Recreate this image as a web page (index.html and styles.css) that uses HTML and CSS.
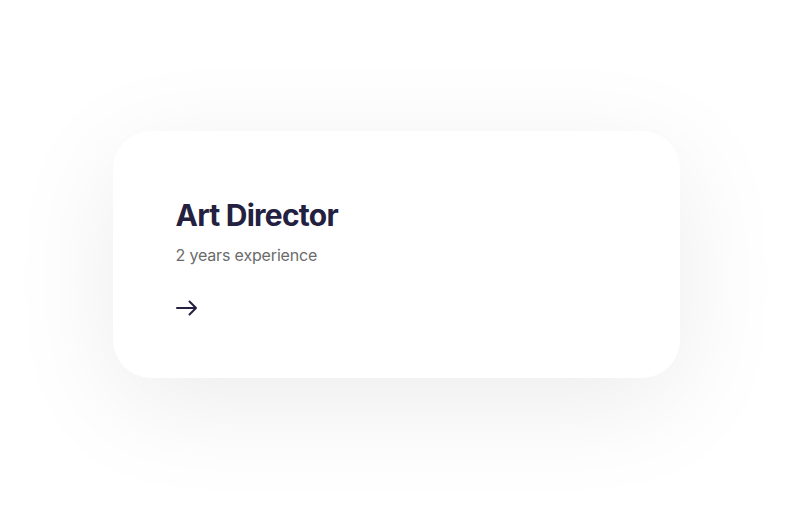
FILE: index.html
```html
<!DOCTYPE html>
<html>
<head>
<meta charset="utf-8">
<link rel="stylesheet" href="styles.css">
</head>
<body>
<div class="card">
  <h2 class="title">Art Director</h2>
  <p class="sub">2 years experience</p>
  <a class="arrow" href="#" aria-label="Open">
    <svg width="22" height="16" viewBox="0 0 22 16" fill="none" stroke="#23213f" stroke-width="2" stroke-linecap="round" stroke-linejoin="round">
      <path d="M1 8h19M13.5 1.5L20 8l-6.5 6.5"/>
    </svg>
  </a>
</div>
</body>
</html>
```
FILE: styles.css
```css
html, body { margin: 0; padding: 0; background: #fff; }
body {
  font-family: Inter, "Noto Sans", sans-serif;
  display: flex;
  justify-content: center;
  align-items: flex-start;
  padding-top: 131px;
  min-height: 530px;
  box-sizing: border-box;
}
.card {
  width: 567px;
  height: 247px;
  box-sizing: border-box;
  padding: 64px 63px;
  background: #fff;
  border-radius: 38px;
  box-shadow: 0 25px 110px rgba(0, 0, 0, 0.08);
  display: flex;
  flex-direction: column;
  align-items: flex-start;
}
.title {
  margin: 0;
  font-size: 30px;
  line-height: 40px;
  font-weight: 700;
  letter-spacing: -0.025em;
  color: #23213f;
}
.sub {
  margin: 9px 0 0;
  font-size: 16px;
  line-height: 22px;
  color: #6b6b6b;
  letter-spacing: -0.01em;
}
.arrow {
  margin-top: 34px;
  display: block;
  line-height: 0;
}
```
